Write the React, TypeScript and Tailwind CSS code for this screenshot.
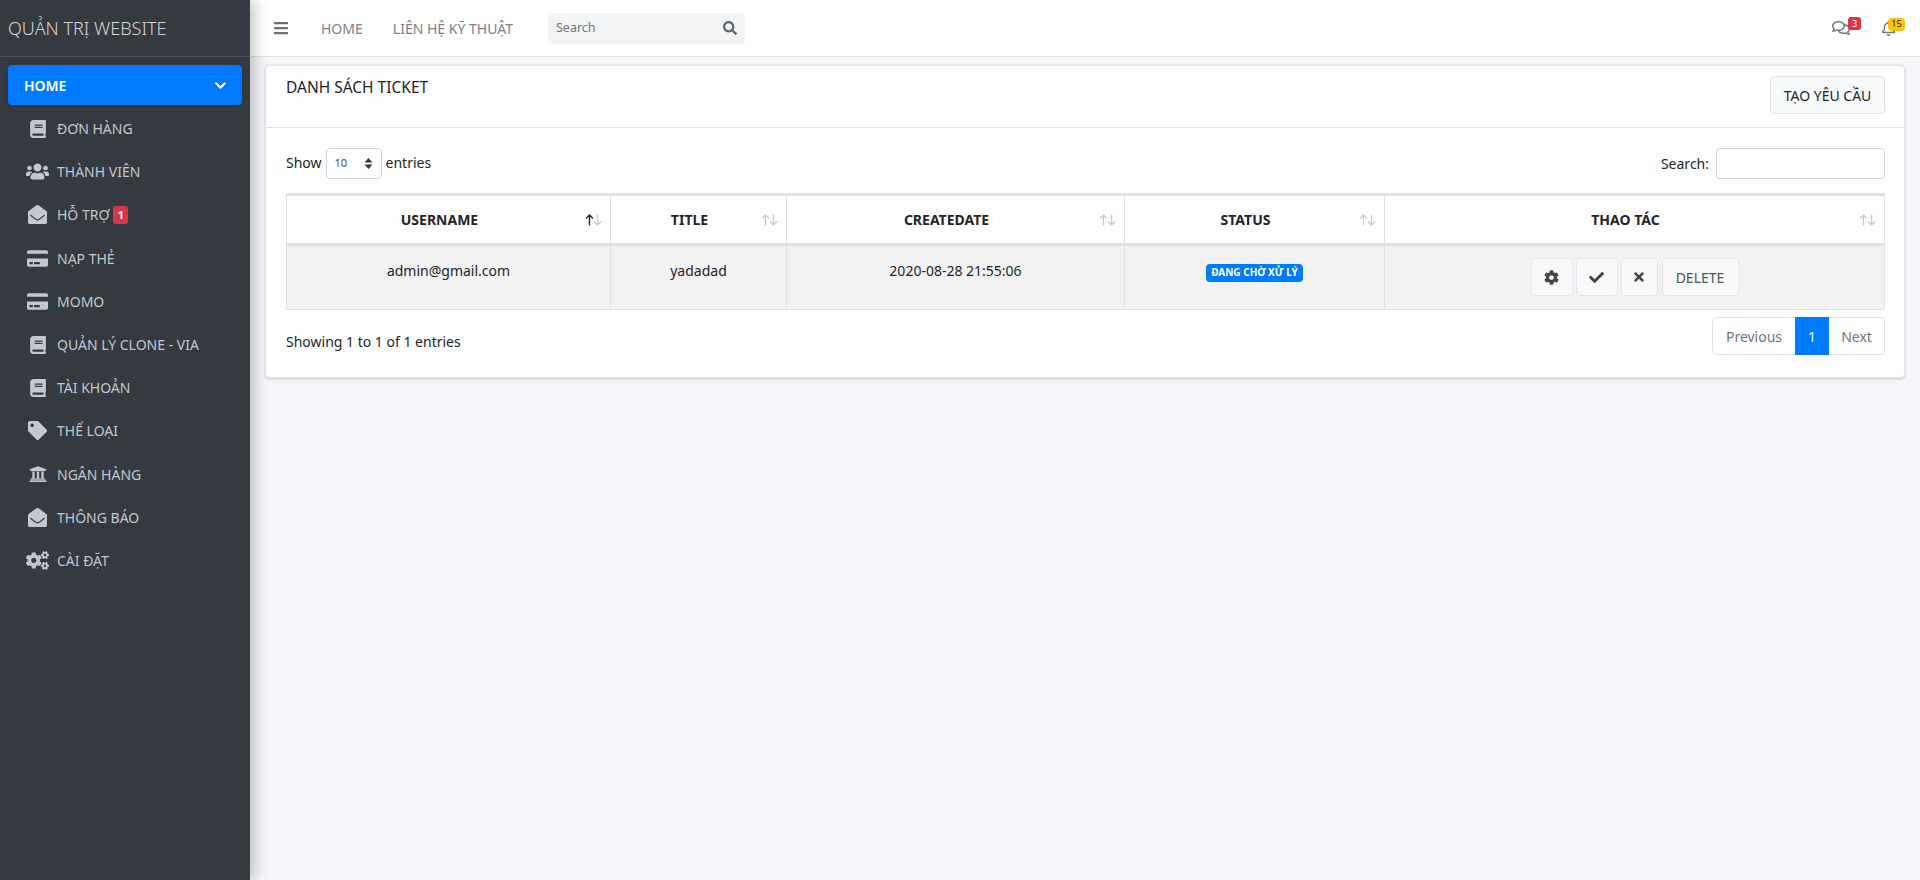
import React from 'react';
import {
  FaBars,
  FaBook,
  FaCheck,
  FaChevronDown,
  FaCog,
  FaCogs,
  FaCreditCard,
  FaEnvelopeOpen,
  FaRegBell,
  FaRegComments,
  FaSearch,
  FaTag,
  FaTimes,
  FaUniversity,
  FaUsers,
} from 'react-icons/fa';

const menu = [
  { label: 'ĐƠN HÀNG', icon: FaBook, size: 'text-[18px]' },
  { label: 'THÀNH VIÊN', icon: FaUsers, size: 'text-[23px]' },
  { label: 'HỖ TRỢ', icon: FaEnvelopeOpen, size: 'text-[19px]', badge: '1' },
  { label: 'NẠP THẺ', icon: FaCreditCard, size: 'text-[21px]' },
  { label: 'MOMO', icon: FaCreditCard, size: 'text-[21px]' },
  { label: 'QUẢN LÝ CLONE - VIA', icon: FaBook, size: 'text-[18px]' },
  { label: 'TÀI KHOẢN', icon: FaBook, size: 'text-[18px]' },
  { label: 'THỂ LOẠI', icon: FaTag, size: 'text-[19px]' },
  { label: 'NGÂN HÀNG', icon: FaUniversity, size: 'text-[18px]' },
  { label: 'THÔNG BÁO', icon: FaEnvelopeOpen, size: 'text-[19px]' },
  { label: 'CÀI ĐẶT', icon: FaCogs, size: 'text-[23px]' },
];

const SortArrows = ({ active }: { active?: boolean }) => (
  <svg
    className="absolute right-[8px] top-1/2 -translate-y-1/2"
    width="17"
    height="12"
    viewBox="0 0 17 12"
    fill="none"
    strokeWidth="1.4"
  >
    <path d="M4.5 11.5V1M1 4.5 4.5 1 8 4.5" stroke={active ? '#212529' : '#c9cbce'} />
    <path d="M12.5.5V11M9 7.5 12.5 11 16 7.5" stroke="#c9cbce" />
  </svg>
);

const HeadCell = ({ label, active }: { label: string; active?: boolean }) => (
  <th className="relative border border-[#dee2e6] border-b-[3px] border-t-[3px] pr-[30px] pl-3 text-center text-[14px] font-bold text-[#212529]">
    {label}
    <SortArrows active={active} />
  </th>
);

const ActionButton = ({ children, className }: { children: React.ReactNode; className: string }) => (
  <button className={`h-[38px] flex items-center justify-center rounded border border-[#e2e5e9] bg-[#f8f9fa] text-[#444] ${className}`}>
    {children}
  </button>
);

export default function App() {
  return (
    <div className="flex min-h-screen bg-[#f4f6f9] font-['Noto_Sans',sans-serif] text-[14px] text-[#212529]">
      <aside className="relative z-10 w-[250px] shrink-0 bg-[#343a40] shadow-[4px_0_14px_rgba(0,0,0,0.25)]">
        <div className="h-[57px] flex items-center pl-2 border-b border-[#4b545c] text-[18px] font-light text-[#d5d6d8]">
          QUẢN TRỊ WEBSITE
        </div>
        <nav className="px-2 pt-2">
          <div className="h-[40px] mb-[2px] flex items-center justify-between pl-4 pr-[15px] rounded bg-[#007bff] text-white font-semibold shadow-sm">
            HOME
            <FaChevronDown className="text-[13px]" />
          </div>
          {menu.map((item) => {
            const Icon = item.icon;
            return (
              <div key={item.label} className="h-[43.2px] flex items-center text-[#c2c7d0]">
                <span className="w-[49px] pl-[10px] flex justify-center">
                  <Icon className={item.size} />
                </span>
                <span>{item.label}</span>
                {item.badge && (
                  <span className="ml-[4px] h-[18px] w-[15px] flex items-center justify-center rounded-[3px] bg-[#dc3545] text-white text-[11px] font-bold">
                    {item.badge}
                  </span>
                )}
              </div>
            );
          })}
        </nav>
      </aside>

      <div className="flex-1 min-w-0">
        <header className="h-[57px] flex items-center bg-white border-b border-[#dee2e6] pl-[23px] pr-[24px] text-[#7d8085]">
          <FaBars className="text-[16px] text-[#6c7075]" />
          <span className="ml-[32px]">HOME</span>
          <span className="ml-[30px]">LIÊN HỆ KỸ THUẬT</span>
          <div className="ml-[35px] w-[197px] h-[31px] flex items-center justify-between px-2 rounded bg-[#f2f4f6] text-[12.5px] text-[#6c757d]">
            Search
            <FaSearch className="text-[14px] text-[#60656a]" />
          </div>
          <div className="ml-auto flex items-center">
            <div className="relative">
              <FaRegComments className="text-[18px] text-[#74787d]" />
              <span className="absolute -top-[2px] left-[16px] h-[13px] w-[13px] flex items-center justify-center rounded-[3px] bg-[#dc3545] text-white text-[9px]">
                3
              </span>
            </div>
            <div className="relative ml-[31px]">
              <FaRegBell className="text-[15px] text-[#74787d]" />
              <span className="absolute -top-[3px] left-[7px] h-[13px] w-[17px] flex items-center justify-center rounded-[4px] bg-[#ffc107] text-[#212529] text-[9px]">
                15
              </span>
            </div>
          </div>
        </header>

        <main className="pt-2 pl-[15px] pr-[15px]">
          <section className="rounded bg-white border border-[#e3e5e8] shadow-[0_1px_3px_rgba(0,0,0,0.2)]">
            <div className="h-[62px] flex justify-between border-b border-[#dee2e6] pl-[20px] pr-[19px] pt-[9px]">
              <h3 className="text-[15.5px] leading-[24px] text-[#212529]">DANH SÁCH TICKET</h3>
              <button className="mt-px h-[38px] w-[115px] rounded border border-[#dfe2e6] bg-[#f8f9fa] text-[#212529]">
                TẠO YÊU CẦU
              </button>
            </div>
            <div className="pt-[20px] pb-[22px] pl-[20px] pr-[19px]">
              <div className="h-[31px] flex items-center justify-between">
                <div className="flex items-center">
                  <span className="pb-[2px]">Show</span>
                  <div className="mx-[4px] w-[56px] h-[31px] flex items-center justify-between pl-2 pr-2 rounded border border-[#ced4da] text-[11px] text-[#495057]">
                    10
                    <svg width="9" height="13" viewBox="0 0 9 13" fill="#343a40">
                      <path d="M4.5 1 8.5 5.5H.5zM4.5 12 .5 7.5h8z" />
                    </svg>
                  </div>
                  <span className="pb-[2px]">entries</span>
                </div>
                <div className="flex items-center">
                  Search:
                  <div className="ml-[7px] w-[169px] h-[31px] rounded border border-[#ced4da] bg-white" />
                </div>
              </div>

              <table className="mt-[14px] w-full table-fixed border-collapse">
                <colgroup>
                  <col className="w-[324px]" />
                  <col className="w-[176px]" />
                  <col className="w-[338px]" />
                  <col className="w-[260px]" />
                  <col />
                </colgroup>
                <thead>
                  <tr className="h-[50px]">
                    <HeadCell label="USERNAME" active />
                    <HeadCell label="TITLE" />
                    <HeadCell label="CREATEDATE" />
                    <HeadCell label="STATUS" />
                    <HeadCell label="THAO TÁC" />
                  </tr>
                </thead>
                <tbody>
                  <tr className="bg-[#f2f2f2] text-center align-top">
                    <td className="border border-[#dee2e6] px-3 pt-[13px] pb-3 leading-[24px]">admin@gmail.com</td>
                    <td className="border border-[#dee2e6] px-3 pt-[13px] pb-3 leading-[24px]">yadadad</td>
                    <td className="border border-[#dee2e6] px-3 pt-[13px] pb-3 leading-[24px]">2020-08-28 21:55:06</td>
                    <td className="border border-[#dee2e6] px-3 pt-[14px]">
                      <span className="inline-flex h-[18px] px-[5px] items-center rounded-[4px] bg-[#007bff] text-white text-[10px] font-bold">
                        ĐANG CHỜ XỬ LÝ
                      </span>
                    </td>
                    <td className="border border-[#dee2e6] pt-[12px] pb-[13px]">
                      <div className="flex justify-center gap-[3px]">
                        <ActionButton className="w-[42px]">
                          <FaCog className="text-[15px]" />
                        </ActionButton>
                        <ActionButton className="w-[42px]">
                          <FaCheck className="text-[15px]" />
                        </ActionButton>
                        <ActionButton className="w-[37px]">
                          <FaTimes className="text-[14px]" />
                        </ActionButton>
                        <ActionButton className="ml-[1px] w-[77px] text-[#555]">DELETE</ActionButton>
                      </div>
                    </td>
                  </tr>
                </tbody>
              </table>

              <div className="mt-[7px] flex items-center justify-between">
                <span className="pt-[10px]">Showing 1 to 1 of 1 entries</span>
                <div className="flex h-[38px] rounded border border-[#dee2e6] text-[#6c757d]">
                  <span className="w-[82px] flex items-center justify-center">Previous</span>
                  <span className="w-[34px] -my-px flex items-center justify-center bg-[#007bff] text-white">1</span>
                  <span className="w-[55px] flex items-center justify-center">Next</span>
                </div>
              </div>
            </div>
          </section>
        </main>
      </div>
    </div>
  );
}
